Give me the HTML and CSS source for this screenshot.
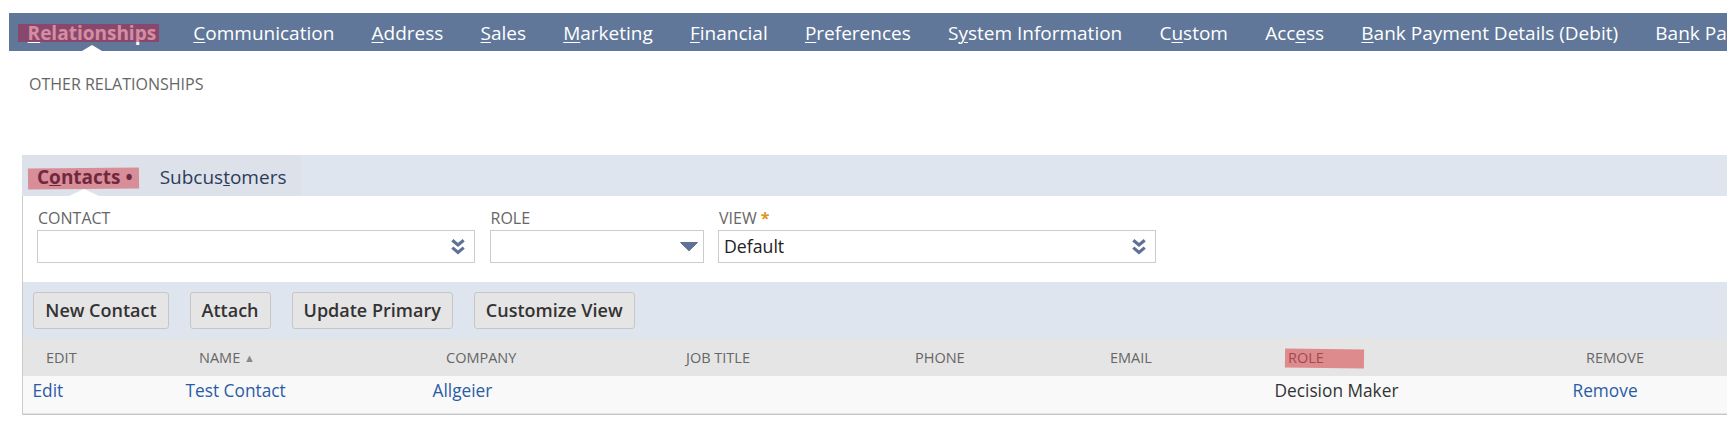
FILE: index.html
```html
<!DOCTYPE html>
<html lang="en">
<head>
<meta charset="utf-8">
<title>Relationships</title>
<link rel="stylesheet" href="styles.css">
</head>
<body>
<nav class="tabs">
  <a class="tab active"><span class="mark mark-nav"><u>R</u>elationships</span></a>
  <a class="tab"><u>C</u>ommunication</a>
  <a class="tab"><u>A</u>ddress</a>
  <a class="tab"><u>S</u>ales</a>
  <a class="tab"><u>M</u>arketing</a>
  <a class="tab"><u>F</u>inancial</a>
  <a class="tab"><u>P</u>references</a>
  <a class="tab">S<u>y</u>stem Information</a>
  <a class="tab">C<u>u</u>stom</a>
  <a class="tab">Acc<u>e</u>ss</a>
  <a class="tab"><u>B</u>ank Payment Details (Debit)</a>
  <a class="tab">Ba<u>n</u>k Pa</a>
</nav>

<div class="section-title">OTHER RELATIONSHIPS</div>

<div class="sublist">
  <div class="subtabbar">
    <div class="subtab-group">
      <span class="subtab active"><span class="mark mark-sub">C<u>o</u>ntacts •</span></span>
      <span class="subtab">Subcus<u>t</u>omers</span>
    </div>
  </div>

  <div class="panel">
    <div class="fields">
      <div class="field field-wide">
        <div class="label">CONTACT</div>
        <div class="select">
          <span class="value"></span>
          <svg class="chev" viewBox="0 0 16 17" width="16" height="17"><path d="M2.3 2.2 L8 7 L13.7 2.2 M2.3 9.6 L8 14.4 L13.7 9.6" fill="none" stroke="#5d7295" stroke-width="3.2"/></svg>
        </div>
      </div>
      <div class="field field-narrow">
        <div class="label">ROLE</div>
        <div class="select select-role">
          <span class="value"></span>
          <svg class="tri" viewBox="0 0 18 9" width="18" height="9"><path d="M0.5 0.5 H17.5 L9 8.8 Z" fill="#5d7295" stroke="#5d7295" stroke-width="1" stroke-linejoin="round"/></svg>
        </div>
      </div>
      <div class="field field-wide">
        <div class="label">VIEW <span class="req">*</span></div>
        <div class="select">
          <span class="value">Default</span>
          <svg class="chev" viewBox="0 0 16 17" width="16" height="17"><path d="M2.3 2.2 L8 7 L13.7 2.2 M2.3 9.6 L8 14.4 L13.7 9.6" fill="none" stroke="#5d7295" stroke-width="3.2"/></svg>
        </div>
      </div>
    </div>

    <div class="buttons">
      <button class="btn">New Contact</button>
      <button class="btn">Attach</button>
      <button class="btn">Update Primary</button>
      <button class="btn">Customize View</button>
    </div>

    <div class="list">
      <div class="row head">
        <div class="cell">EDIT</div>
        <div class="cell">NAME <span class="sort">▲</span></div>
        <div class="cell">COMPANY</div>
        <div class="cell">JOB TITLE</div>
        <div class="cell">PHONE</div>
        <div class="cell">EMAIL</div>
        <div class="cell"><span class="mark mark-role">ROLE</span></div>
        <div class="cell">REMOVE</div>
      </div>
      <div class="row data">
        <div class="cell"><a class="link">Edit</a></div>
        <div class="cell"><a class="link">Test Contact</a></div>
        <div class="cell"><a class="link">Allgeier</a></div>
        <div class="cell"></div>
        <div class="cell"></div>
        <div class="cell"></div>
        <div class="cell">Decision Maker</div>
        <div class="cell"><a class="link">Remove</a></div>
      </div>
    </div>
  </div>
</div>
</body>
</html>
```

FILE: styles.css
```css
html, body {
  margin: 0;
  background: #ffffff;
}

body {
  padding: 13px 0 0 9px;
  font-family: "Open Sans", "Liberation Sans", sans-serif;
  color: #333333;
  overflow: hidden;
}

/* ---------- main tab bar ---------- */
.tabs {
  display: flex;
  height: 38px;
  background: #607799;
  overflow: hidden;
  white-space: nowrap;
}

.tab {
  flex: none;
  position: relative;
  box-sizing: border-box;
  height: 38px;
  padding: 3px 18.6px 0;
  font-size: 19px;
  line-height: 35px;
  color: #ffffff;
  text-decoration: none;
}

.tab u {
  text-underline-offset: 2px;
  text-decoration-thickness: 1px;
}

.tab.active {
  font-weight: 700;
}

.tab.active::after {
  content: "";
  position: absolute;
  left: 50%;
  bottom: 0;
  margin-left: -10px;
  border-left: 10px solid transparent;
  border-right: 10px solid transparent;
  border-bottom: 6px solid #ffffff;
}

/* highlighter annotations */
.mark {
  position: relative;
}

.mark::after {
  content: "";
  position: absolute;
  background: rgba(200, 28, 58, 0.45);
}

.mark-nav::after {
  left: -10px;
  right: -3px;
  top: 4px;
  bottom: 4px;
  background: rgba(175, 25, 65, 0.5);
}

.mark-sub::after {
  left: -9px;
  right: -6px;
  top: 4px;
  bottom: 1px;
  transform: rotate(-0.6deg);
  background: rgba(210, 40, 55, 0.45);
}

.mark-role::after {
  left: -3px;
  right: -40px;
  top: 1px;
  bottom: -1px;
  transform: rotate(0.8deg);
  background: rgba(215, 50, 55, 0.5);
}

/* ---------- section title ---------- */
.section-title {
  margin: 22px 0 0 20px;
  font-size: 16px;
  line-height: 22px;
  color: #666666;
}

/* ---------- sublist ---------- */
.sublist {
  margin: 60px 0 0 13px;
}

.subtabbar {
  display: flex;
  height: 41px;
  background: #dfe5ee;
}

.subtab-group {
  display: flex;
  padding: 0 1px;
  background: #dde2ea;
}

.subtab {
  position: relative;
  padding: 9px 14px 0;
  font-size: 19px;
  line-height: 26px;
  color: #2c3c5b;
  white-space: nowrap;
}

.subtab.active {
  font-weight: 700;
  color: #1e2a44;
  padding-right: 13px;
}

.subtab.active::after {
  content: "";
  position: absolute;
  left: 50%;
  bottom: 0;
  margin-left: -15px;
  border-left: 15px solid transparent;
  border-right: 15px solid transparent;
  border-bottom: 7px solid #ffffff;
}

.panel {
  border-left: 1px solid #cbcbcb;
  border-bottom: 1px solid #c6c6c6;
}

/* ---------- fields ---------- */
.fields {
  display: flex;
  gap: 14.5px;
  padding: 12px 0 19.5px 14px;
}

.field-wide {
  width: 438px;
}

.field-narrow {
  width: 214px;
}

.label {
  padding-left: 1px;
  margin-bottom: 1.5px;
  font-size: 16px;
  line-height: 20px;
  color: #666666;
}

.req {
  color: #e0951c;
  font-weight: 700;
}

.select {
  display: flex;
  align-items: center;
  justify-content: space-between;
  box-sizing: border-box;
  height: 33px;
  padding: 0 8px 0 5px;
  border: 1px solid #cccccc;
  background: #ffffff;
}

.select-role {
  padding-right: 5px;
}

.value {
  font-size: 17.7px;
  color: #222222;
}

.chev, .tri {
  display: block;
  flex: none;
}

/* ---------- buttons ---------- */
.buttons {
  display: flex;
  align-items: flex-start;
  gap: 21px;
  box-sizing: border-box;
  height: 56px;
  padding: 10px 0 0 10.3px;
  background: #dfe5ee;
}

.btn {
  box-sizing: border-box;
  height: 37px;
  padding: 0 11px;
  border: 1px solid #c6c6c6;
  border-radius: 3px;
  background: #e5e5e5;
  font-family: "Open Sans", "Liberation Sans", sans-serif;
  font-size: 18px;
  font-weight: 600;
  line-height: 35px;
  color: #333333;
}

/* ---------- list ---------- */
.row {
  display: grid;
  grid-template-columns: 153px 247px 240px 229px 195px 178px 298px 1fr;
}

.head {
  height: 38px;
  background: #e5e5e5;
  font-size: 14.5px;
  line-height: 38px;
  color: #666666;
}

.head .cell {
  padding: 1px 0 0 23px;
  white-space: nowrap;
}

.sort {
  font-size: 11px;
  color: #8a8a8a;
  vertical-align: 1px;
}

.data {
  box-sizing: border-box;
  height: 38px;
  padding-top: 2.5px;
  background: #f9f9f9;
  border-bottom: 1px solid #e4e4e4;
  font-size: 17.3px;
  line-height: 24px;
  color: #333333;
}

.data .cell {
  padding-left: 9.5px;
  white-space: nowrap;
}

.link {
  color: #2a5ca6;
  text-decoration: none;
}
```
